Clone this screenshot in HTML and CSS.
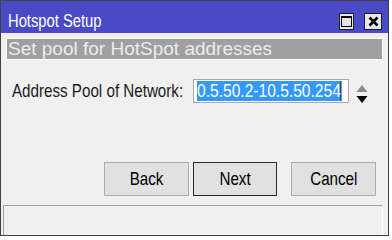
FILE: index.html
```html
<!DOCTYPE html>
<html>
<head>
<meta charset="utf-8">
<link rel="stylesheet" href="styles.css">
</head>
<body>
<div class="window">
  <div class="titlebar">
    <span class="title">Hotspot Setup</span>
    <div class="wbtns">
      <span class="wbtn max"><span class="maxsq"></span></span>
      <span class="wbtn close">
        <svg width="11" height="11" viewBox="0 0 11 11"><path d="M1.5 1.5 L9.5 9.5 M9.5 1.5 L1.5 9.5" stroke="#000" stroke-width="2.6" fill="none"/></svg>
      </span>
    </div>
  </div>
  <div class="subtitle">Set pool for HotSpot addresses</div>
  <div class="row">
    <label class="label"><span class="narrow">Address Pool of Network:</span></label>
    <div class="input"><span class="sel">0.5.50.2-10.5.50.254</span></div>
    <svg class="spin" width="12" height="19" viewBox="0 0 12 19"><path d="M6 0 L11.5 7 L0.5 7 Z" fill="#8c8c8c"/><path d="M0.5 11 L11.5 11 L6 18 Z" fill="#000"/></svg>
  </div>
  <div class="buttons">
    <button class="btn"><span class="narrow">Back</span></button>
    <button class="btn default"><span class="narrow">Next</span></button>
    <button class="btn cancel"><span class="narrow">Cancel</span></button>
  </div>
  <div class="status"></div>
</div>
</body>
</html>
```
FILE: styles.css
```css
html, body {
  margin: 0;
  padding: 0;
  background: #ffffff;
}
body {
  font-family: "Liberation Sans", Arial, sans-serif;
  color: #000;
}
.narrow {
  display: inline-block;
  white-space: nowrap;
  transform: scaleX(0.82);
  transform-origin: 0 50%;
}
.window {
  box-sizing: border-box;
  width: 389px;
  height: 236px;
  border: 1px solid #404040;
  background: #f0f0f0;
  display: flex;
  flex-direction: column;
}
.titlebar {
  height: 32px;
  background: #4a4ac6;
  display: flex;
  align-items: center;
  box-sizing: border-box;
  padding: 8px 6px 0 7px;
}
.title {
  color: #ffffff;
  font-size: 18px;
  flex: 1;
  white-space: nowrap;
  transform: scaleX(0.82);
  transform-origin: 0 50%;
}
.wbtns {
  display: flex;
  gap: 10px;
  align-items: center;
}
.wbtn {
  box-sizing: border-box;
  height: 17px;
  background: #e6e6e6;
  border: 1px solid #202020;
  display: flex;
  align-items: center;
  justify-content: center;
}
.max { width: 15px; }
.close { width: 18px; }
.maxsq {
  box-sizing: border-box;
  width: 11px;
  height: 11px;
  border: 1px solid #000;
  border-top-width: 2px;
}
.subtitle {
  box-sizing: border-box;
  margin: 5px 5px 0 5px;
  height: 22px;
  border: 1px solid #fafafa;
  background: #a0a0a0;
  color: #ececec;
  font-size: 19px;
  line-height: 20px;
  padding-left: 1px;
  white-space: nowrap;
  overflow: hidden;
}
.row {
  margin-top: 19px;
  display: flex;
  align-items: flex-start;
  padding-left: 11px;
}
.label {
  width: 181px;
  font-size: 18.5px;
  line-height: 24px;
  color: #1a1a1a;
  white-space: nowrap;
}
.input {
  box-sizing: border-box;
  width: 156px;
  height: 24px;
  border: 1px solid #a8a8a8;
  background: #fff;
  padding: 1px 3px;
  overflow: hidden;
  white-space: nowrap;
}
.sel {
  display: inline-block;
  background: #3399ff;
  color: #fff;
  font-size: 19px;
  line-height: 20px;
  white-space: nowrap;
  border-right: 1.3px solid #000;
  transform: scaleX(0.82);
  transform-origin: 0 50%;
}
.spin {
  margin-left: 7px;
  margin-top: 6px;
}
.buttons {
  margin-top: 58px;
  padding-left: 103px;
  display: flex;
  gap: 4px;
}
.btn {
  box-sizing: border-box;
  width: 85px;
  height: 34px;
  margin: 0;
  padding: 0;
  background: #e1e1e1;
  border: 1px solid #adadad;
  font-family: inherit;
  font-size: 18.5px;
  color: #000;
}
.btn .narrow {
  transform-origin: 50% 50%;
}
.btn.default {
  width: 84px;
  border: 1px solid #2a2a2a;
}
.btn.cancel {
  margin-left: 10px;
}
.status {
  flex: 1;
  margin: 9px 5px 0 2px;
  border-top: 1px solid #a0a0a0;
  border-left: 1px solid #a0a0a0;
  border-right: 1px solid #ffffff;
}
```
